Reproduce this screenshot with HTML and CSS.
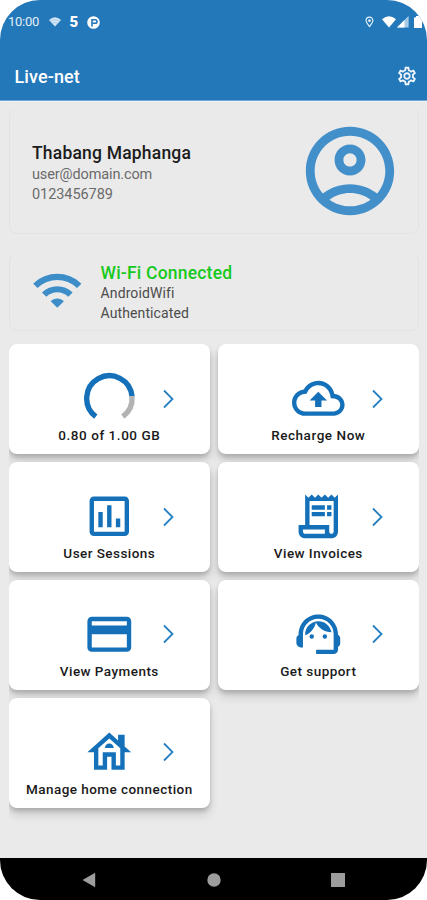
FILE: index.html
```html
<!DOCTYPE html>
<html lang="en">
<head>
<meta charset="utf-8">
<title>Live-net</title>
<link rel="stylesheet" href="styles.css">
</head>
<body>
<div class="screen">
  <header class="header">
    <div class="status">
      <div class="status-left">
        <span class="clock">10:00</span>
        <svg class="s-wifi" viewBox="0 0 12 10"><path d="M0 3Q6-2.4 12 3L6 9.6z" fill="#d5e6f5"/><path d="M1 4.6Q6 .8 11 4.6M2.8 6.6Q6 4.2 9.2 6.6" fill="none" stroke="#8dbbe0" stroke-width=".6"/></svg>
        <span class="five">5</span>
        <svg class="s-badge" viewBox="0 0 13 13"><circle cx="6.5" cy="6.5" r="6.3" fill="#fff"/><path d="M5 10.5V3.7h3.2a1.8 1.8 0 0 1 0 3.6H5.5" fill="none" stroke="#2378ba" stroke-width="1.6"/></svg>
      </div>
      <div class="status-right">
        <svg class="s-pin" viewBox="0 0 10 12"><path d="M5 11C3 8.4 1.2 6.3 1.2 4.4a3.8 3.8 0 0 1 7.6 0C8.8 6.3 7 8.4 5 11z" fill="none" stroke="#e6f1fa" stroke-width="1.3"/><circle cx="5" cy="4.5" r="1.5" fill="#e6f1fa"/></svg>
        <svg class="s-net" viewBox="0 0 14 12"><path d="M0 3.2Q7-2.6 14 3.2L7 11.6z" fill="#fff"/></svg>
        <svg class="s-cell" viewBox="0 0 12 12"><path d="M0 11.6L11.6 0v11.6z" fill="#a9cbe8"/><path d="M0 11.6L7.5 4v7.6z" fill="#fff"/></svg>
        <svg class="s-batt" viewBox="0 0 8 12"><path d="M0 2.5Q0 1.2 1.3 1.2H2V0h4v1.2h.7Q8 1.2 8 2.5V12H0z" fill="#fff"/></svg>
      </div>
    </div>
    <div class="appbar">
      <h1>Live-net</h1>
      <svg class="gear" viewBox="0 0 24 24"><path d="M19.43 12.98c.04-.32.07-.64.07-.98 0-.34-.03-.66-.07-.98l2.11-1.65c.19-.15.24-.42.12-.64l-2-3.46c-.09-.16-.26-.25-.44-.25-.06 0-.12.01-.17.03l-2.49 1c-.52-.4-1.08-.73-1.69-.98l-.38-2.65C14.46 2.18 14.25 2 14 2h-4c-.25 0-.46.18-.49.42l-.38 2.65c-.61.25-1.17.59-1.69.98l-2.49-1c-.06-.02-.12-.03-.18-.03-.17 0-.34.09-.43.25l-2 3.46c-.13.22-.07.49.12.64l2.11 1.65c-.04.32-.07.65-.07.98 0 .33.03.66.07.98l-2.11 1.65c-.19.15-.24.42-.12.64l2 3.46c.09.16.26.25.44.25.06 0 .12-.01.17-.03l2.49-1c.52.4 1.08.73 1.69.98l.38 2.65c.03.24.24.42.49.42h4c.25 0 .46-.18.49-.42l.38-2.65c.61-.25 1.17-.59 1.69-.98l2.49 1c.06.02.12.03.18.03.17 0 .34-.09.43-.25l2-3.46c.12-.22.07-.49-.12-.64l-2.11-1.65zm-1.98-1.71c.04.31.05.52.05.73 0 .21-.02.43-.05.73l-.14 1.13.89.7 1.08.84-.7 1.21-1.27-.51-1.04-.42-.9.68c-.43.32-.84.56-1.25.73l-1.06.43-.16 1.13-.2 1.35h-1.4l-.19-1.35-.16-1.13-1.06-.43c-.43-.18-.83-.41-1.23-.71l-.91-.7-1.06.43-1.27.51-.7-1.21 1.08-.84.89-.7-.14-1.13c-.03-.31-.05-.54-.05-.74s.02-.43.05-.73l.14-1.13-.89-.7-1.08-.84.7-1.21 1.27.51 1.04.42.9-.68c.43-.32.84-.56 1.25-.73l1.06-.43.16-1.13.2-1.35h1.39l.19 1.35.16 1.13 1.06.43c.43.18.83.41 1.23.71l.91.7 1.06-.43 1.27-.51.7 1.21-1.07.85-.89.7.14 1.13zM12 8c-2.21 0-4 1.79-4 4s1.79 4 4 4 4-1.79 4-4-1.79-4-4-4zm0 6c-1.1 0-2-.9-2-2s.9-2 2-2 2 .9 2 2-.9 2-2 2z"/></svg>
    </div>
  </header>
  <main class="main">
    <section class="panel profile">
      <div class="profile-text">
        <h2 class="name">Thabang Maphanga</h2>
        <p class="mail">user@domain.com</p>
        <p class="phone">0123456789</p>
      </div>
      <svg class="avatar" viewBox="0 0 24 24"><path d="M12 2C6.48 2 2 6.48 2 12s4.48 10 10 10 10-4.48 10-10S17.52 2 12 2zM7.35 18.5C8.66 17.56 10.26 17 12 17s3.34.56 4.65 1.5C15.34 19.44 13.74 20 12 20s-3.34-.56-4.65-1.5zm10.79-1.38C16.45 15.8 14.32 15 12 15s-4.45.8-6.14 2.12C4.7 15.73 4 13.95 4 12c0-4.42 3.58-8 8-8s8 3.58 8 8c0 1.95-.7 3.73-1.86 5.12zM12 6c-1.93 0-3.5 1.57-3.5 3.5S10.07 13 12 13s3.5-1.57 3.5-3.5S13.93 6 12 6zm0 5c-.83 0-1.5-.67-1.5-1.5S11.17 8 12 8s1.5.67 1.5 1.5S12.83 11 12 11z"/></svg>
    </section>
    <section class="panel wifi">
      <svg class="wifi-icon" viewBox="0 0 24 24"><path d="M1 9l2 2c4.97-4.97 13.03-4.97 18 0l2-2C16.93 2.93 7.08 2.93 1 9zm8 8l3 3 3-3c-1.65-1.66-4.34-1.66-6 0zm-4-4l2 2c2.76-2.76 7.24-2.76 10 0l2-2C15.14 9.14 8.87 9.14 5 13z"/></svg>
      <div class="wifi-text">
        <h2 class="state">Wi-Fi Connected</h2>
        <p class="ssid">AndroidWifi</p>
        <p class="auth">Authenticated</p>
      </div>
    </section>
    <section class="grid">
      <div class="card">
        <svg class="icon" viewBox="0 0 52.6 52.6"><g fill="none" stroke-width="5.4"><path d="M12.8 44.6A22.7 22.7 0 1 1 49 24.3" stroke="#1470b8"/><path d="M49 24.3A22.7 22.7 0 0 1 39.8 44.6" stroke="#b3b3b3"/></g></svg>
        <svg class="chev" viewBox="0 0 11 20"><path d="M1 1.5L9.5 10 1 18.5"/></svg>
        <span class="label l-data">0.80 of 1.00 GB</span>
      </div>
      <div class="card">
        <svg class="icon" viewBox="0 0 24 24"><path d="M19.35 10.04C18.67 6.59 15.64 4 12 4 9.11 4 6.6 5.64 5.35 8.04 2.34 8.36 0 10.91 0 14c0 3.31 2.69 6 6 6h13c2.76 0 5-2.24 5-5 0-2.64-2.05-4.78-4.65-4.96zM19 18H6c-2.21 0-4-1.79-4-4 0-2.05 1.53-3.76 3.56-3.97l1.07-.11.5-.95C8.08 7.14 9.94 6 12 6c2.62 0 4.88 1.86 5.39 4.43l.3 1.5 1.53.11c1.56.1 2.78 1.41 2.78 2.96 0 1.65-1.35 3-3 3zM8 13h2.55v3h2.9v-3H16l-4-4z"/></svg>
        <svg class="chev" viewBox="0 0 11 20"><path d="M1 1.5L9.5 10 1 18.5"/></svg>
        <span class="label l-recharge">Recharge Now</span>
      </div>
      <div class="card">
        <svg class="icon" viewBox="0 0 24 24"><path d="M19 3H5c-1.1 0-2 .9-2 2v14c0 1.1.9 2 2 2h14c1.1 0 2-.9 2-2V5c0-1.1-.9-2-2-2zm0 16H5V5h14v14zM7 10h2v7H7zM11 7h2v10h-2zM15 13h2v4h-2z"/></svg>
        <svg class="chev" viewBox="0 0 11 20"><path d="M1 1.5L9.5 10 1 18.5"/></svg>
        <span class="label l-sessions">User Sessions</span>
      </div>
      <div class="card">
        <svg class="icon" viewBox="0 0 24 24"><path d="M19.5 3.5L18 2l-1.5 1.5L15 2l-1.5 1.5L12 2l-1.5 1.5L9 2 7.5 3.5 6 2v14H3v3c0 1.66 1.34 3 3 3h12c1.66 0 3-1.34 3-3V2l-1.5 1.5zM15 20H6c-.55 0-1-.45-1-1v-1h10v2zm4-1c0 .55-.45 1-1 1s-1-.45-1-1v-3H8V5h11v14zM9 7h6v2H9zM16 7h2v2h-2zM9 10h6v2H9zM16 10h2v2h-2z"/></svg>
        <svg class="chev" viewBox="0 0 11 20"><path d="M1 1.5L9.5 10 1 18.5"/></svg>
        <span class="label l-invoices">View Invoices</span>
      </div>
      <div class="card">
        <svg class="icon" viewBox="0 0 24 24"><path d="M20 4H4c-1.11 0-1.99.89-1.99 2L2 18c0 1.11.89 2 2 2h16c1.11 0 2-.89 2-2V6c0-1.11-.89-2-2-2zm0 14H4v-6h16v6zm0-10H4V6h16v2z"/></svg>
        <svg class="chev" viewBox="0 0 11 20"><path d="M1 1.5L9.5 10 1 18.5"/></svg>
        <span class="label l-payments">View Payments</span>
      </div>
      <div class="card">
        <svg class="icon" viewBox="0 0 24 24"><path d="M21 12.22C21 6.73 16.74 3 12 3c-4.69 0-9 3.65-9 9.28-.6.34-1 .98-1 1.72v2c0 1.1.9 2 2 2h1v-6.1c0-3.87 3.13-7 7-7s7 3.13 7 7V19h-8v2h8c1.1 0 2-.9 2-2v-1.22c.59-.31 1-.92 1-1.64v-2.3c0-.7-.41-1.31-1-1.62z"/><circle cx="9" cy="13" r="1"/><circle cx="15" cy="13" r="1"/><path d="M18 11.03C17.52 8.18 15.04 6 12.05 6c-3.03 0-6.29 2.51-6.03 6.45 2.47-1.01 4.33-3.21 4.86-5.89 1.31 2.63 4 4.44 7.12 4.47z"/></svg>
        <svg class="chev" viewBox="0 0 11 20"><path d="M1 1.5L9.5 10 1 18.5"/></svg>
        <span class="label l-support">Get support</span>
      </div>
      <div class="card">
        <svg class="icon" viewBox="0 0 24 24"><path d="M19 9.3V4h-3v2.6L12 3 2 12h3v8h6v-6h2v6h6v-8h3l-3-2.7zM17 18h-2v-6H9v6H7v-7.81l5-4.5 5 4.5V18z"/><path d="M10 10h4c0-1.1-.9-2-2-2s-2 .9-2 2z"/></svg>
        <svg class="chev" viewBox="0 0 11 20"><path d="M1 1.5L9.5 10 1 18.5"/></svg>
        <span class="label l-home">Manage home connection</span>
      </div>
    </section>
  </main>
  <nav class="nav">
    <svg viewBox="0 0 14 16"><path d="M0.5 8L13.2 .8v14.4z"/></svg>
    <svg viewBox="0 0 14 16"><circle cx="7" cy="8" r="6.7"/></svg>
    <svg viewBox="0 0 14 16"><path d="M0 1h14v14H0z"/></svg>
  </nav>
</div>
</body>
</html>
```
FILE: styles.css
```css
* { box-sizing: border-box; }
body {
  margin: 0;
  background: #fff;
  font-family: Roboto, "Liberation Sans", sans-serif;
}
h1, h2, p { margin: 0; font-weight: 400; }
svg { display: block; flex: none; }
.screen {
  width: 427px;
  height: 900px;
  border-radius: 40px;
  overflow: hidden;
  background: #eaeaea;
  display: flex;
  flex-direction: column;
}
.header {
  height: 101px;
  background: #2378ba;
  border-bottom: 1px solid #6fa5d0;
  box-shadow: 0 1px #edf3f7;
  color: #fff;
}
.status {
  height: 44px;
  padding: 0 5.5px 0 8px;
  display: flex;
  justify-content: space-between;
  align-items: center;
}
.status-left, .status-right { display: flex; align-items: center; }
.clock { font-size: 13px; line-height: 16px; width: 41px; color: #e4eff9; letter-spacing: -.25px; white-space: nowrap; }
.s-wifi { width: 12px; height: 10px; }
.five { font-size: 15px; line-height: 16px; font-weight: 900; width: 9px; margin: 0 0 0 8.5px; }
.s-badge { width: 13px; height: 13px; margin-left: 8px; }
.s-pin { width: 9px; height: 12px; margin-right: 8px; }
.s-net { width: 14px; height: 12px; }
.s-cell { width: 12px; height: 12px; margin: 0 5px 0 1px; }
.s-batt { width: 8px; height: 12px; }
.appbar {
  height: 56px;
  padding: 20px 9.5px 0 14.5px;
  display: flex;
  justify-content: space-between;
  align-items: flex-start;
}
.appbar h1 { font-size: 18px; line-height: 22px; margin-top: 2px; font-weight: 500; letter-spacing: .1px; }
.gear { width: 22px; height: 22px; margin: 1px 0 0; fill: #eef6fc; }

.main { flex: 1; padding: 7px 8.4px 0 9px; }
.panel {
  border: 1px solid #e3e3e3;
  border-top-color: #e8e8e8;
  border-radius: 8px;
  display: flex;
}
.profile {
  height: 126px;
  padding: 9px 14.5px 0 22px;
  justify-content: space-between;
}
.profile-text { padding-top: 24px; }
.name { font-size: 17.5px; line-height: 22px; font-weight: 500; letter-spacing: .2px; color: #1c1c1c; }
.mail, .phone { font-size: 14.5px; line-height: 19.5px; color: #6a6a6a; position: relative; top: 1px; }
.mail { letter-spacing: -.13px; }
.phone { letter-spacing: -.07px; }
.avatar { width: 106px; height: 106px; fill: #438fca; }
.wifi {
  height: 78px;
  margin-top: 19px;
  padding: 9px 0 0 21px;
}
.wifi-icon { width: 52.6px; height: 52.6px; margin-top: 1px; fill: #3d8dc9; }
.wifi-text { padding-left: 17px; margin-top: -.5px; }
.state { font-size: 17.5px; line-height: 20px; font-weight: 500; letter-spacing: .2px; color: #16c91c; }
.ssid, .auth { font-size: 14px; line-height: 19.5px; letter-spacing: .1px; color: #4c4c4c; }
.ssid { margin-top: 1.5px; }

.grid {
  margin-top: 13.4px;
  padding-bottom: 26px;
  display: grid;
  grid-template-columns: 200.6px 200.6px;
  grid-auto-rows: 109.5px;
  gap: 8.4px;
  overflow: clip;
}
.card {
  background: #fff;
  border-radius: 8px;
  box-shadow: 0 3px 4px rgba(0, 0, 0, .17), 0 7px 10px rgba(0, 0, 0, .13);
  display: grid;
  grid-template-columns: 1fr 52.6px 1fr;
  grid-template-rows: 52.6px 20px;
  padding-top: 28px;
}
.icon { grid-column: 2; width: 52.6px; height: 52.6px; fill: #1470b8; }
.chev {
  width: 11px;
  height: 20px;
  align-self: center;
  margin-left: 27px;
  fill: none;
  stroke: #2480c2;
  stroke-width: 1.8;
}
.label {
  grid-column: 1 / 4;
  justify-self: center;
  font-size: 13.5px;
  line-height: 20px;
  font-weight: 500;
  letter-spacing: .45px;
  color: #1a1a1a;
  white-space: nowrap;
}
.l-data, .l-recharge { letter-spacing: .55px; }
.nav {
  height: 42px;
  background: #000;
  padding: 13.5px 82px 0 82px;
  display: flex;
  justify-content: space-between;
}
.nav svg { width: 14px; height: 16px; fill: #9d9d9d; }
```
